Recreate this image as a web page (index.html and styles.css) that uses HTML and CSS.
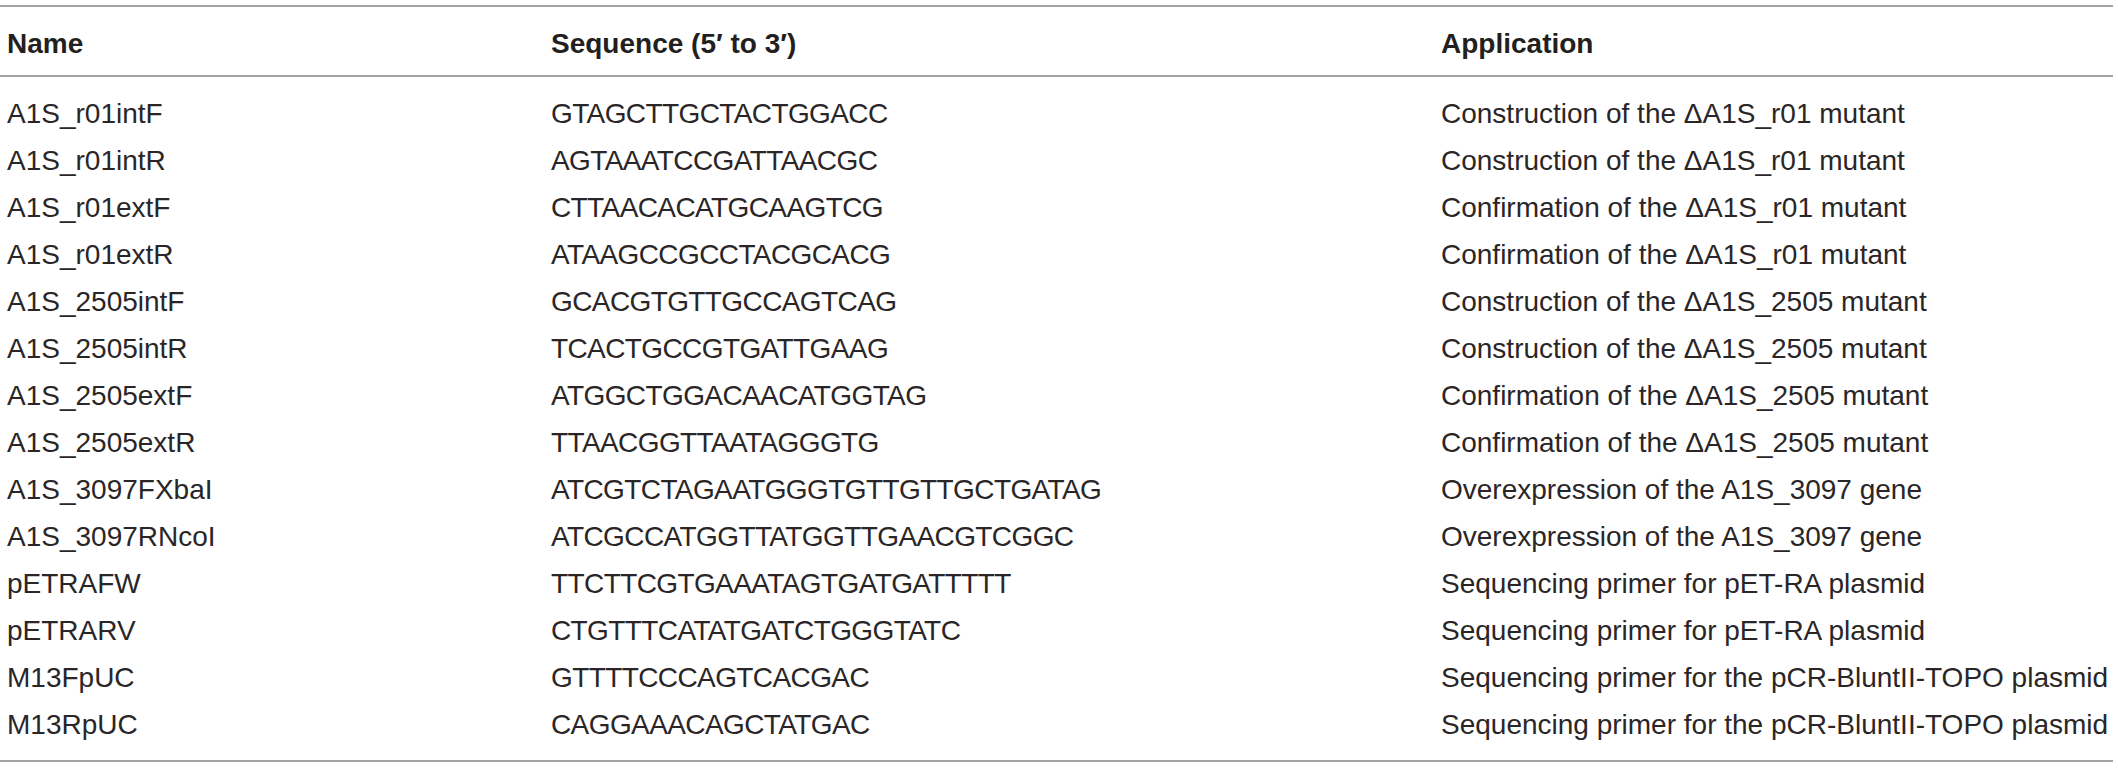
FILE: index.html
```html
<!DOCTYPE html>
<html lang="en">
<head>
<meta charset="utf-8">
<title>Primers</title>
<link rel="stylesheet" href="styles.css">
</head>
<body>
<div class="wrap">
<table class="primers">
<colgroup>
<col class="c-name">
<col class="c-seq">
<col class="c-app">
</colgroup>
<thead>
<tr><th>Name</th><th>Sequence (5′ to 3′)</th><th>Application</th></tr>
</thead>
<tbody>
<tr><td>A1S_r01intF</td><td class="seq">GTAGCTTGCTACTGGACC</td><td>Construction of the ΔA1S_r01 mutant</td></tr>
<tr><td>A1S_r01intR</td><td class="seq">AGTAAATCCGATTAACGC</td><td>Construction of the ΔA1S_r01 mutant</td></tr>
<tr><td>A1S_r01extF</td><td class="seq">CTTAACACATGCAAGTCG</td><td>Confirmation of the ΔA1S_r01 mutant</td></tr>
<tr><td>A1S_r01extR</td><td class="seq">ATAAGCCGCCTACGCACG</td><td>Confirmation of the ΔA1S_r01 mutant</td></tr>
<tr><td>A1S_2505intF</td><td class="seq">GCACGTGTTGCCAGTCAG</td><td>Construction of the ΔA1S_2505 mutant</td></tr>
<tr><td>A1S_2505intR</td><td class="seq">TCACTGCCGTGATTGAAG</td><td>Construction of the ΔA1S_2505 mutant</td></tr>
<tr><td>A1S_2505extF</td><td class="seq">ATGGCTGGACAACATGGTAG</td><td>Confirmation of the ΔA1S_2505 mutant</td></tr>
<tr><td>A1S_2505extR</td><td class="seq">TTAACGGTTAATAGGGTG</td><td>Confirmation of the ΔA1S_2505 mutant</td></tr>
<tr><td>A1S_3097FXbaI</td><td class="seq">ATCGTCTAGAATGGGTGTTGTTGCTGATAG</td><td>Overexpression of the A1S_3097 gene</td></tr>
<tr><td>A1S_3097RNcoI</td><td class="seq">ATCGCCATGGTTATGGTTGAACGTCGGC</td><td>Overexpression of the A1S_3097 gene</td></tr>
<tr><td>pETRAFW</td><td class="seq">TTCTTCGTGAAATAGTGATGATTTTT</td><td>Sequencing primer for pET-RA plasmid</td></tr>
<tr><td>pETRARV</td><td class="seq">CTGTTTCATATGATCTGGGTATC</td><td>Sequencing primer for pET-RA plasmid</td></tr>
<tr><td>M13FpUC</td><td class="seq">GTTTTCCCAGTCACGAC</td><td>Sequencing primer for the pCR-BluntII-TOPO plasmid</td></tr>
<tr><td>M13RpUC</td><td class="seq">CAGGAAACAGCTATGAC</td><td>Sequencing primer for the pCR-BluntII-TOPO plasmid</td></tr>
</tbody>
</table>
</div>
</body>
</html>
```

FILE: styles.css
```css
html, body {
  margin: 0;
  padding: 0;
  background: #ffffff;
}

body {
  font-family: "Liberation Sans", Arial, Helvetica, sans-serif;
  color: #2a2627;
}

.wrap {
  padding-top: 5px;
}

.primers {
  width: 2113px;
  border-collapse: collapse;
  table-layout: fixed;
}

.c-name { width: 544px; }
.c-seq { width: 890px; }

.primers th,
.primers td {
  padding: 0 0 0 7px;
  font-size: 28px;
  line-height: 47px;
  text-align: left;
  white-space: nowrap;
  vertical-align: top;
}

.primers td {
  font-weight: normal;
}

.primers td.seq {
  letter-spacing: -0.6px;
}

.primers thead th {
  font-weight: bold;
  color: #231f20;
  padding-top: 13px;
  padding-bottom: 8px;
  border-top: 2px solid #a3a3a3;
  border-bottom: 2px solid #a3a3a3;
}

.primers tbody tr:first-child td {
  padding-top: 13px;
}

.primers tbody tr:last-child td {
  padding-bottom: 12px;
  border-bottom: 2px solid #a3a3a3;
}
```
